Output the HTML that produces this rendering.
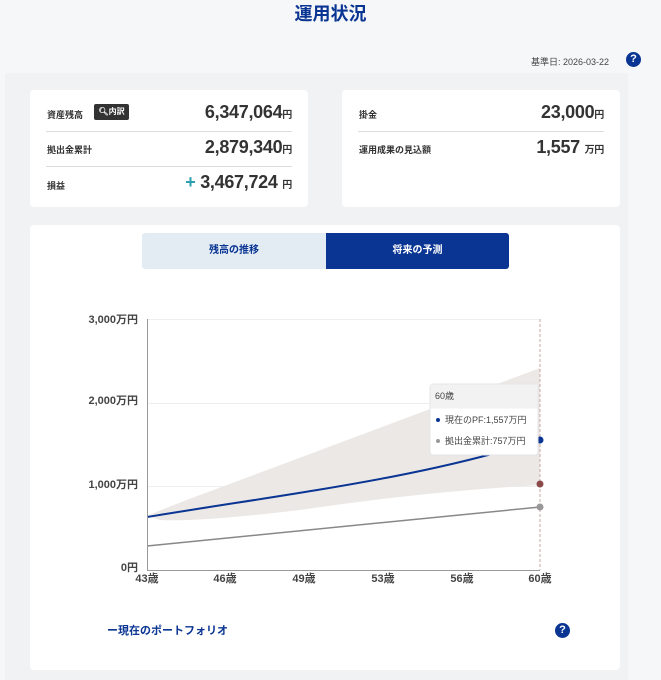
<!DOCTYPE html>
<html><head><meta charset="utf-8"><style>
body{margin:0;width:661px;height:680px;background:#f6f7f9;font-family:"Liberation Sans","Noto Sans CJK JP",sans-serif;color:#333;position:relative;overflow:hidden}
.a{position:absolute}
h1{position:absolute;top:0px;left:0;width:661px;text-align:center;margin:0;font-size:18px;color:#0a3593;font-weight:bold}
.card{position:absolute;background:#fff;border-radius:4px}
.lbl{position:absolute;font-size:9px;font-weight:bold;color:#333}
.val{position:absolute;font-size:18px;font-weight:bold;color:#333;text-align:right;letter-spacing:-0.3px}
.val small{font-size:10px}
.line{position:absolute;height:1px;background:#ddd}
.q{position:absolute;width:15px;height:15px;border-radius:50%;background:#0a3593;color:#fff;font-size:11px;font-weight:bold;text-align:center;line-height:15px}
</style></head><body>
<h1>運用状況</h1>
<div class="a" style="left:531px;top:55px;font-size:9px;color:#444">基準日: 2026-03-22</div>
<div class="q" style="left:626px;top:52px">?</div>
<div class="a" style="left:5px;top:73px;width:623px;height:607px;background:#f1f2f4"></div>
<div class="card" style="left:30px;top:90px;width:278px;height:117px">
<div class="lbl" style="left:17px;top:18px">資産残高</div>
<div class="a" style="left:64px;top:14px;width:35px;height:16px;background:#333;border-radius:2px;color:#fff;font-size:8px;font-weight:bold;line-height:16px;text-align:center">🔍︎内訳</div>
<div class="val" style="right:16px;top:12px">6,347,064<small>円</small></div>
<div class="line" style="left:16px;right:16px;top:41px"></div>
<div class="lbl" style="left:17px;top:53px">拠出金累計</div>
<div class="val" style="right:16px;top:47px">2,879,340<small>円</small></div>
<div class="line" style="left:16px;right:16px;top:76px"></div>
<div class="lbl" style="left:17px;top:89px">損益</div>
<div class="val" style="right:16px;top:82px"><span style="color:#2aa0b0">+</span> 3,467,724 <small>円</small></div>
</div>
<div class="card" style="left:342px;top:90px;width:278px;height:117px">
<div class="lbl" style="left:17px;top:18px">掛金</div>
<div class="val" style="right:16px;top:12px">23,000<small>円</small></div>
<div class="line" style="left:16px;right:16px;top:41px"></div>
<div class="lbl" style="left:17px;top:53px">運用成果の見込額</div>
<div class="val" style="right:16px;top:47px">1,557 <small>万円</small></div>
</div>
<div class="card" style="left:30px;top:225px;width:590px;height:445px"></div>
<div class="a" style="left:142px;top:233px;width:184px;height:36px;background:#e3ebf3;border-radius:3px 0 0 3px;color:#0a3593;font-size:10px;font-weight:bold;text-align:center;line-height:36px">残高の推移</div>
<div class="a" style="left:326px;top:233px;width:183px;height:36px;background:#0a3593;border-radius:0 3px 3px 0;color:#fff;font-size:10px;font-weight:bold;text-align:center;line-height:36px">将来の予測</div>
<svg class="a" style="left:0;top:0" width="661" height="680">
<g stroke="#eee" stroke-width="1"><line x1="147" y1="319.5" x2="540" y2="319.5"/><line x1="147" y1="403.5" x2="540" y2="403.5"/><line x1="147" y1="486.5" x2="540" y2="486.5"/></g>
<path d="M147 516 Q160 510 200 495 L540 368 L540 485 Q420 492 300 510 Q200 522 160 520 Z" fill="#ece8e6"/>
<line x1="540" y1="319" x2="540" y2="570" stroke="#c9a8a8" stroke-dasharray="3,2"/>
<path d="M147 517 C300 492 420 478 540 440" fill="none" stroke="#0a3593" stroke-width="2"/>
<line x1="147" y1="546" x2="540" y2="507" stroke="#888" stroke-width="1.5"/>
<line x1="147.5" y1="319" x2="147.5" y2="571" stroke="#999"/>
<line x1="147" y1="570.5" x2="540" y2="570.5" stroke="#999"/>
<circle cx="540" cy="440" r="3.5" fill="#0a3593"/><circle cx="540" cy="484" r="3.5" fill="#8a4a4a"/><circle cx="540" cy="507" r="3.5" fill="#999"/>
<g font-size="11" font-weight="bold" fill="#444" text-anchor="end"><text x="138" y="323">3,000万円</text><text x="138" y="404">2,000万円</text><text x="138" y="488">1,000万円</text><text x="138" y="571">0円</text></g>
<g font-size="11" font-weight="bold" fill="#444" text-anchor="middle"><text x="147" y="582">43歳</text><text x="225" y="582">46歳</text><text x="304" y="582">49歳</text><text x="383" y="582">53歳</text><text x="462" y="582">56歳</text><text x="540" y="582">60歳</text></g>
<rect x="430" y="384" width="108" height="71" rx="3" fill="#fff" stroke="#e5e5e5"/>
<rect x="430.5" y="384.5" width="107" height="24" fill="#f2f2f2"/>
<g font-size="9" fill="#444"><text x="435" y="399">60歳</text><text x="445" y="423">現在のPF:1,557万円</text><text x="445" y="444">拠出金累計:757万円</text></g>
<circle cx="438" cy="420" r="2" fill="#0a3593"/><circle cx="438" cy="441" r="2" fill="#999"/>
</svg>
<div class="a" style="left:107px;top:622px;font-size:11px;font-weight:bold;color:#0a3593">ー現在のポートフォリオ</div>
<div class="q" style="left:555px;top:623px">?</div>
</body></html>
